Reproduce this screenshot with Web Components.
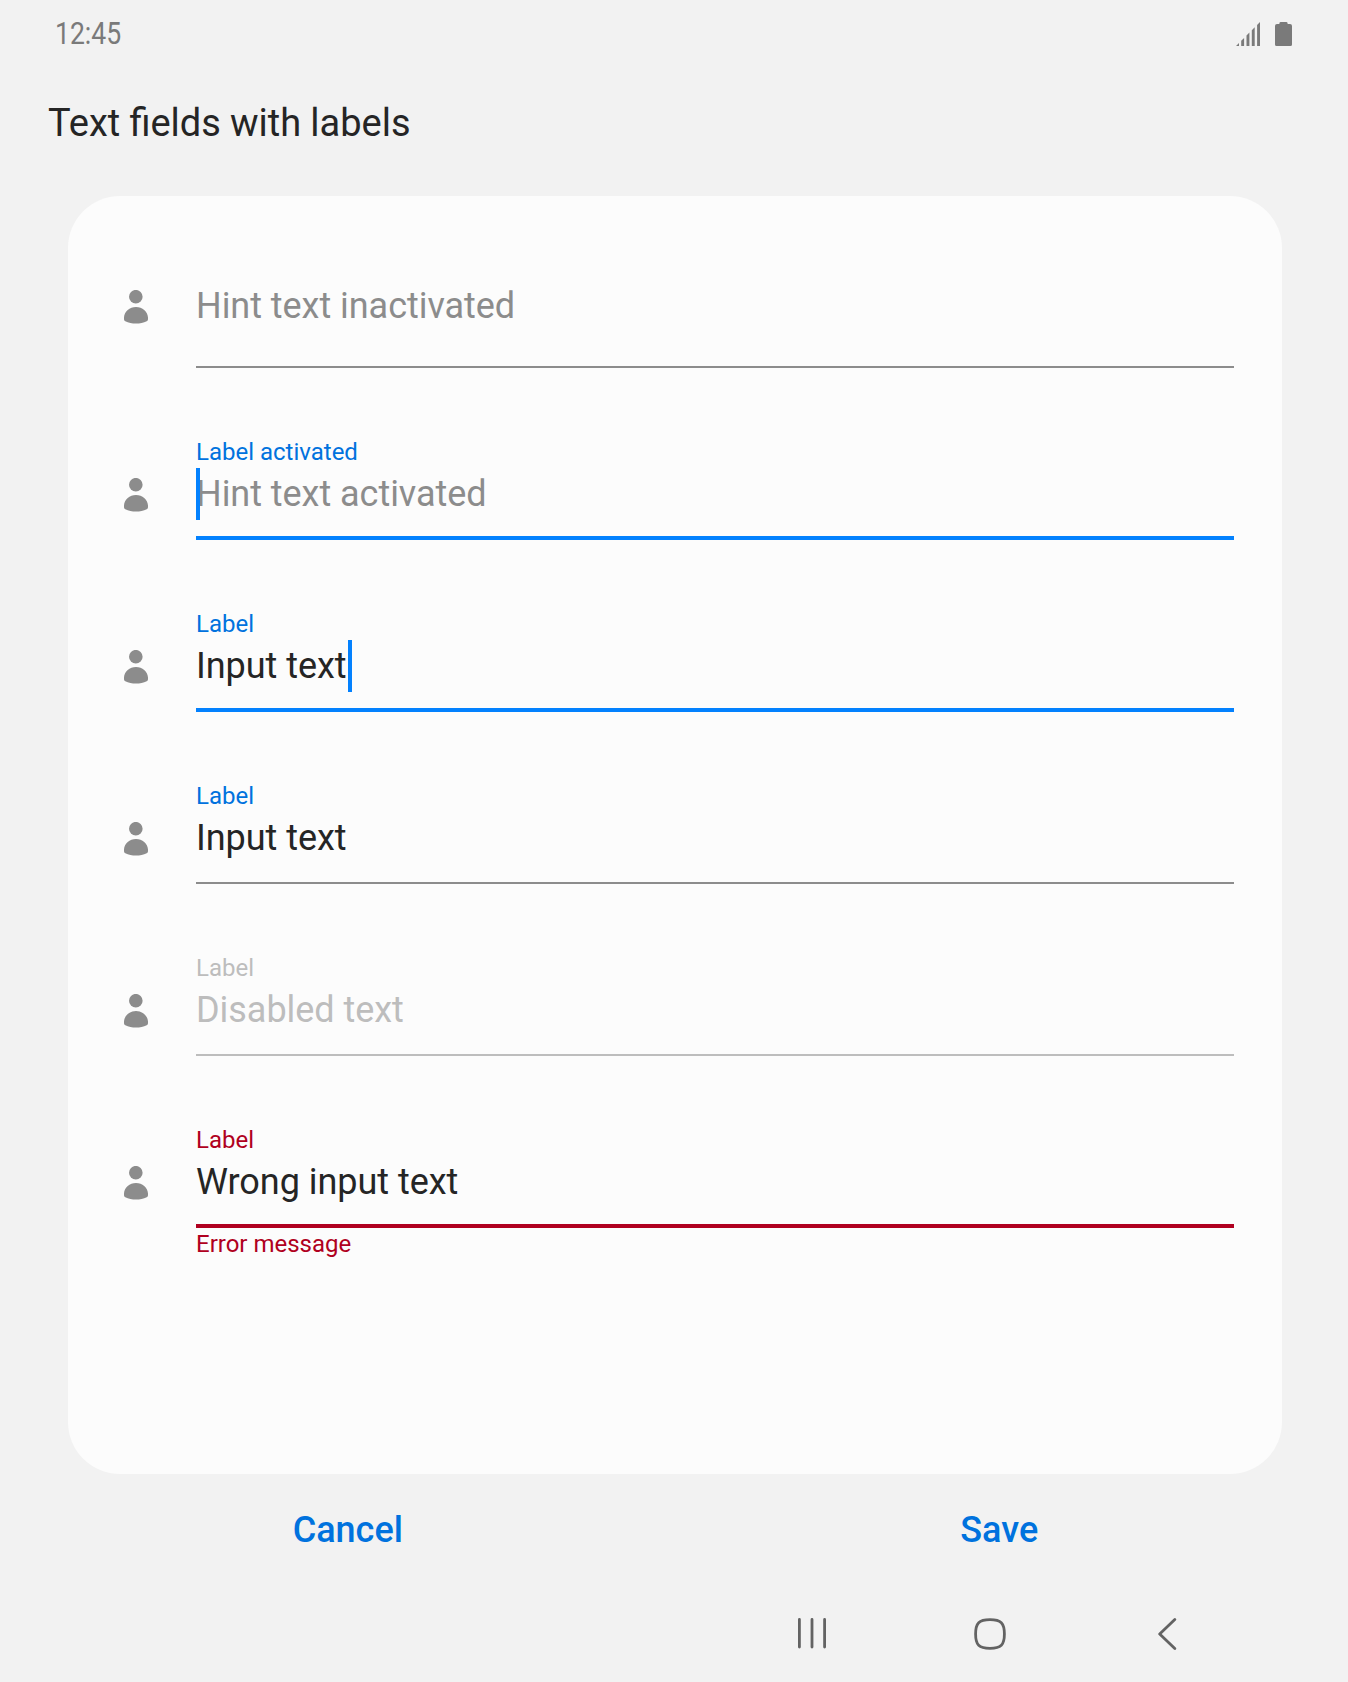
<!DOCTYPE html>
<html lang="en">
<head>
<meta charset="utf-8">
<title>Text fields with labels</title>
<style>
html,body{margin:0;height:100%;background:#f2f2f2}
body{font-family:Roboto,"Liberation Sans",sans-serif;color:#252525}
</style>
</head>
<body>
<settings-screen></settings-screen>
<script>
function define(name, html, setup){
  const t = document.createElement('template');
  t.innerHTML = html;
  customElements.define(name, class extends HTMLElement{
    connectedCallback(){
      if(this.shadowRoot) return;
      this.attachShadow({mode:'open'}).appendChild(t.content.cloneNode(true));
      if(setup) setup(this, this.shadowRoot);
    }
  });
}

define('status-bar', `
<style>
:host{display:flex;box-sizing:border-box;height:68px;justify-content:space-between;align-items:center;padding:0 56px 0 55px;color:#7a7a7a}
.time{font-size:31px;line-height:36px;transform:scaleX(.857);transform-origin:0 50%}
.icons{display:flex;gap:15px}
svg{display:block;fill:#7a7a7a}
</style>
<span class="time"><slot></slot></span>
<span class="icons">
<svg width="24" height="24" viewBox="0 0 24 24"><path d="M0 24L3 21V24ZM5.2 24V18.8L8.1 15.9V24ZM10.5 24V13.5L13.4 10.6V24ZM15.8 24V8.2L18.7 5.3V24ZM21.1 24V2.9L24 0V24Z"/></svg>
<svg width="17" height="24" viewBox="0 0 17 24"><path d="M5.5 0H11.5Q12.7 0 12.7 2H15Q17 2 17 4V22.5Q17 24 15.5 24H1.5Q0 24 0 22.5V4Q0 2 2 2H4.3Q4.3 0 5.5 0Z"/></svg>
</span>`);

define('page-title', `
<style>
:host{display:block;box-sizing:border-box;height:128px;padding:32px 0 0 48px;font-size:38px;line-height:46px;word-spacing:-.3px;color:#252525}
</style><slot></slot>`);

define('person-icon', `
<style>:host{display:block;width:24px;height:34px}svg{display:block;fill:#8c8c8c}</style>
<svg width="24" height="34" viewBox="0 0 24 34"><circle cx="11.8" cy="6.7" r="6.8"/><path d="M0 27.5C.4 21.6 5.6 17 12 17S23.6 21.6 24 27.5V29.2Q24 30.6 22.7 31.2C16.5 34.4 7.5 34.4 1.3 31.2Q0 30.6 0 29.2Z"/></svg>`);

define('text-field', `
<style>
:host{--label:#0072de;--line:#8c8c8c;--text:#252525;--size:2px;display:flex;height:172px;padding:0 48px 0 56px;gap:48px;align-items:flex-end}
:host([state=hint]){--text:#8c8c8c}
:host([state=active-hint]){--text:#8c8c8c;--line:#0381fe;--size:4px}
:host([state=active]){--line:#0381fe;--size:4px}
:host([state=disabled]){--text:#bdbdbd;--label:#bdbdbd;--line:#bdbdbd}
:host([state=error]){--label:#b00020;--line:#b00020;--size:4px}
person-icon{margin-bottom:28px}
:host([state=hint]) person-icon{margin-bottom:44px}
.body{flex:1;position:relative}
.label{height:30px;font-size:24px;line-height:28px;color:var(--label)}
.entry{display:flex;box-sizing:border-box;height:72px;border-bottom:var(--size) solid var(--line);font-size:36px;line-height:52px;letter-spacing:-.04px;color:var(--text);white-space:nowrap}
:host([state=hint]) .entry{height:88px}
.caret{display:none;width:4px;height:52px;background:#0381fe}
:host([state=active-hint]) .caret{display:block;order:-1;margin-right:-4px;z-index:1}
:host([state=active]) .caret{display:block;margin-left:1px}
.error{position:absolute;top:100%;left:0;margin-top:2px;font-size:24px;line-height:28px;color:var(--label)}
</style>
<person-icon></person-icon>
<div class="body"><div class="label"></div><div class="entry"><span><slot></slot></span><span class="caret"></span></div><div class="error"></div></div>`,
(el, root) => {
  for(const part of ['label','error']){
    const node = root.querySelector('.' + part);
    const text = el.getAttribute(part);
    if(text) node.textContent = text; else node.remove();
  }
});

define('form-card', `
<style>:host{display:block;box-sizing:border-box;height:1278px;margin:0 66px 0 68px;border-radius:52px;background:#fcfcfc}</style><slot></slot>`);

define('dialog-actions', `
<style>
:host{display:grid;grid-template-columns:1fr 1fr;height:112px;margin:0 23px 0 22px;align-items:center;justify-items:center}
::slotted(button){all:unset;color:#0072de;font:500 36px/42px Roboto,sans-serif}
</style><slot></slot>`);

define('navigation-bar', `
<style>
:host{display:flex;height:96px;justify-content:flex-end;align-items:center;gap:146px;padding-right:164px}
svg{display:block;fill:none;stroke:#636363;stroke-width:2.8;stroke-linecap:round;stroke-linejoin:round}
</style>
<svg width="32" height="32" viewBox="0 0 32 32"><path d="M3.4 1.5V29M16 1.5V29M28.6 1.5V29"/></svg>
<svg width="32" height="32" viewBox="0 0 32 32"><path d="M16 1.6C27 1.6 30.4 5 30.4 16S27 30.4 16 30.4 1.6 27 1.6 16 5 1.6 16 1.6Z"/></svg>
<svg width="32" height="32" viewBox="0 0 32 32"><path d="M22.8 1.5L7.7 16L22.8 30.5"/></svg>`);

define('settings-screen', `
<style>:host{display:flex;flex-direction:column;width:1348px;height:1682px;overflow:hidden}</style>
<status-bar>12:45</status-bar>
<page-title>Text fields with labels</page-title>
<form-card>
<text-field state="hint">Hint text inactivated</text-field>
<text-field state="active-hint" label="Label activated">Hint text activated</text-field>
<text-field state="active" label="Label">Input text</text-field>
<text-field label="Label">Input text</text-field>
<text-field state="disabled" label="Label">Disabled text</text-field>
<text-field state="error" label="Label" error="Error message">Wrong input text</text-field>
</form-card>
<dialog-actions><button>Cancel</button><button>Save</button></dialog-actions>
<navigation-bar></navigation-bar>`);
</script>
</body>
</html>
